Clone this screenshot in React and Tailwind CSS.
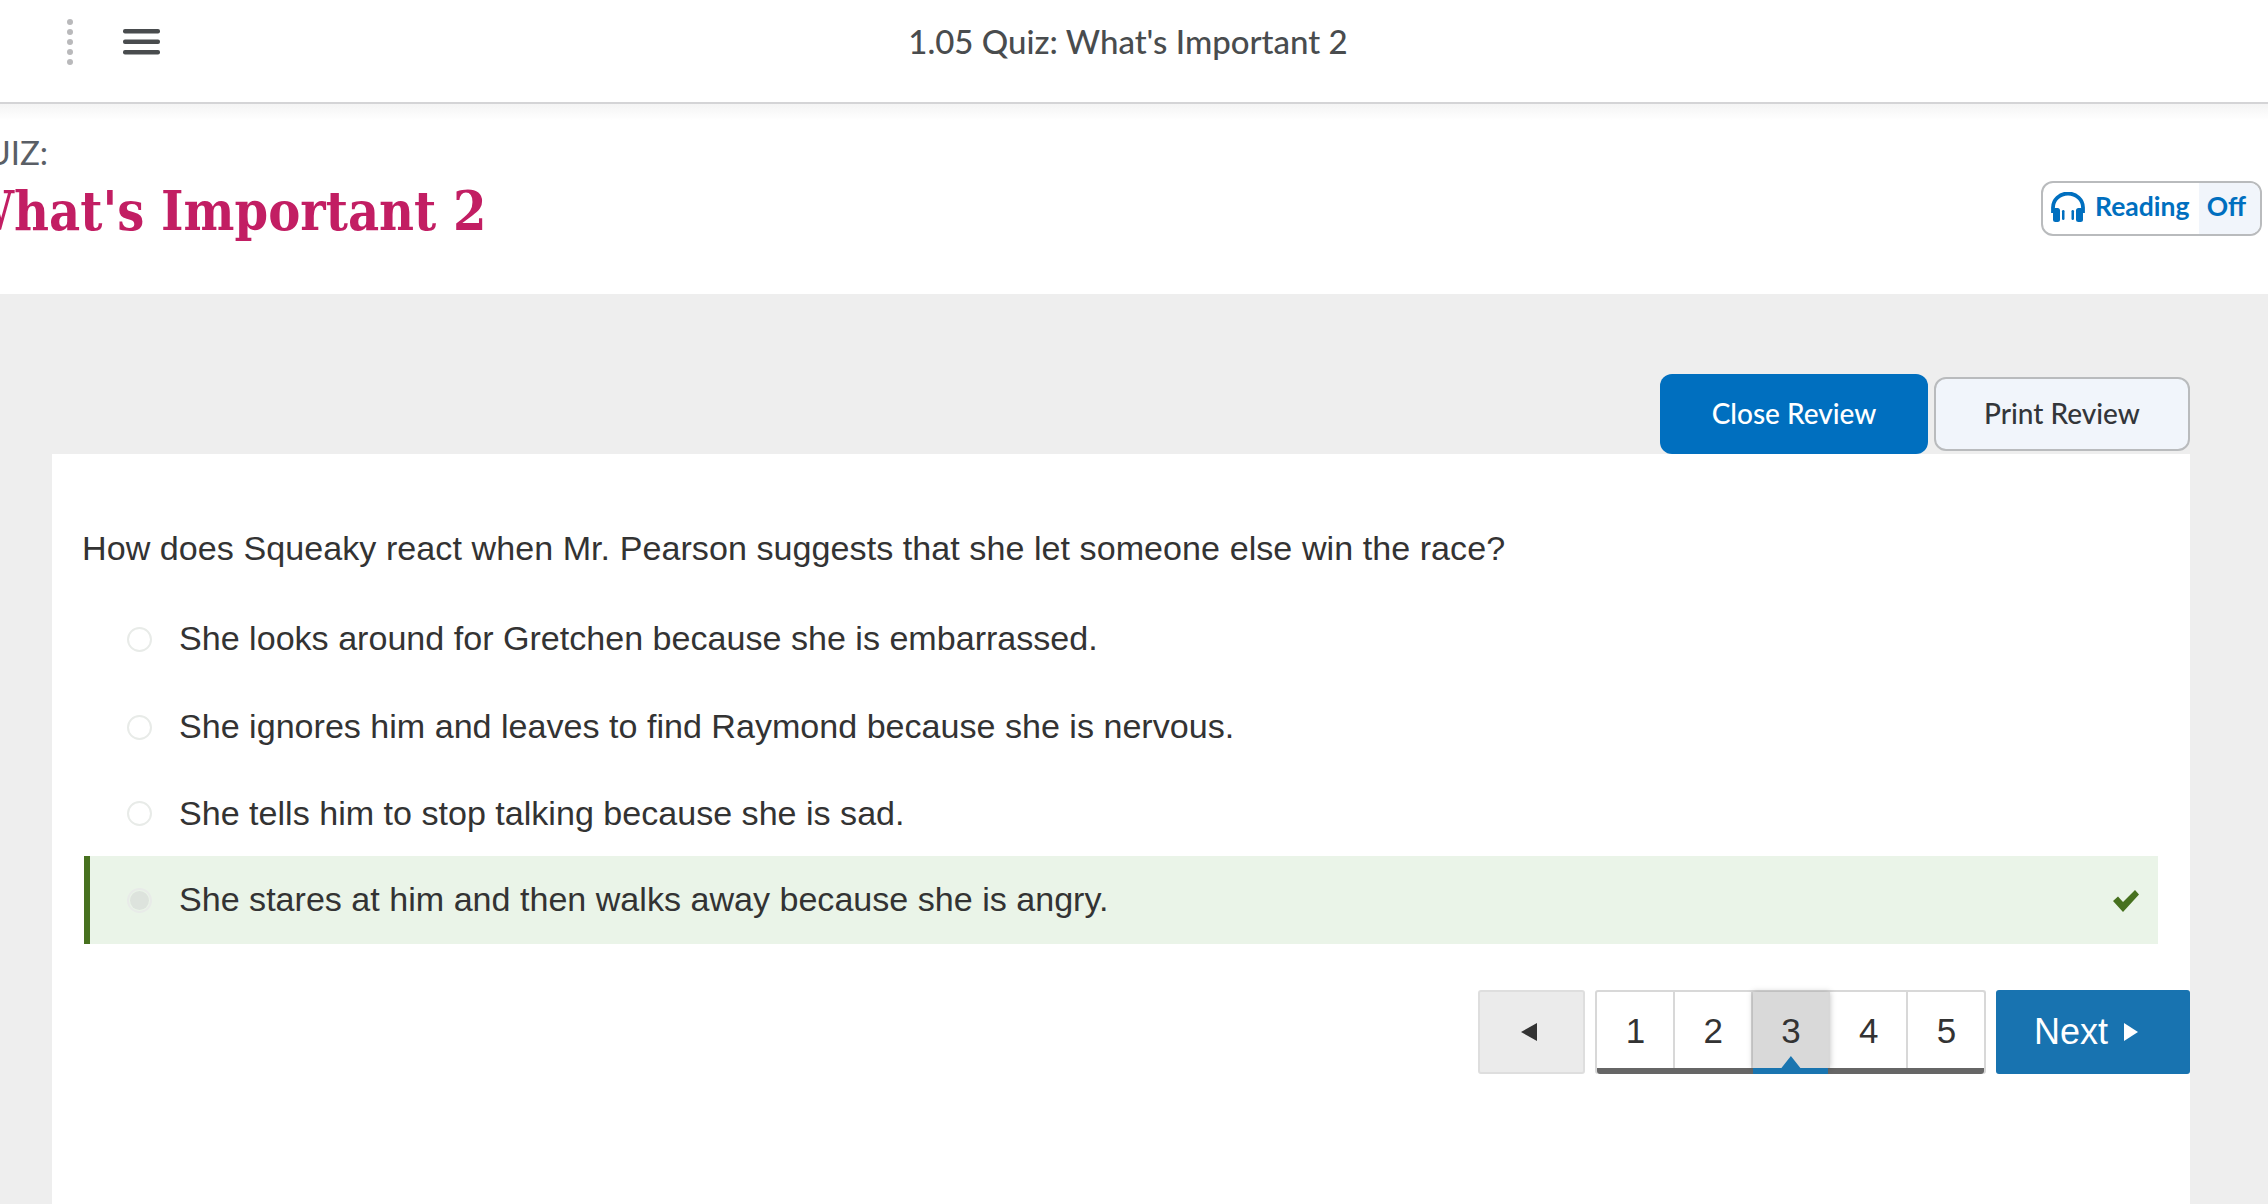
const answers = [
  { text: "She looks around for Gretchen because she is embarrassed.", height: "h-[88px]" },
  { text: "She ignores him and leaves to find Raymond because she is nervous.", height: "h-[88px]" },
  { text: "She tells him to stop talking because she is sad.", height: "h-[85px]" },
];

function Radio({ checked }) {
  return (
    <span className="flex h-[25px] w-[25px] shrink-0 items-center justify-center rounded-full border-2 border-[#e8ebe8]">
      {checked && <span className="h-[19px] w-[19px] rounded-full bg-[#dde3dd]" />}
    </span>
  );
}

function PageCell({ n, active, last }) {
  return (
    <div
      className={`relative flex flex-1 items-center justify-center ${last ? "" : "border-r-2 border-[#d8d8d8]"} ${
        active ? "border-r-0 bg-[#d9d9d9] shadow-[0_0_6px_rgba(0,0,0,0.25)]" : ""
      }`}
    >
      <span className="mt-[2px] ml-[1px]">{n}</span>
      {active && (
        <svg className="absolute bottom-[-6px] left-0 h-[18px] w-full" viewBox="0 0 80 18" preserveAspectRatio="none">
          <path d="M0 12H30L40 0L50 12H80V18H0Z" fill="#1a75b0" />
        </svg>
      )}
    </div>
  );
}

export default function App() {
  return (
    <div className="flex h-[1204px] w-[2268px] flex-col overflow-hidden bg-white font-['Lato',sans-serif] text-[#494c4e]">
      {/* top nav */}
      <header className="grid h-[102px] shrink-0 grid-cols-[1fr_auto_1fr] items-center pb-[18px] pr-[12px]">
        <div className="flex items-center gap-[50px] pl-[67px]">
          <svg width="6" height="46" viewBox="0 0 6 46" fill="#b9b9bb">
            <circle cx="3" cy="3" r="3" />
            <circle cx="3" cy="13" r="3" />
            <circle cx="3" cy="23" r="3" />
            <circle cx="3" cy="33" r="3" />
            <circle cx="3" cy="43" r="3" />
          </svg>
          <svg width="37" height="26" viewBox="0 0 37 26" fill="#494c4e">
            <rect y="0" width="37" height="4.5" rx="2" />
            <rect y="10.5" width="37" height="4.5" rx="2" />
            <rect y="21" width="37" height="4.5" rx="2" />
          </svg>
        </div>
        <div className="text-[33px] font-medium">1.05 Quiz: What's Important 2</div>
        <div className="flex justify-end">
          <span className="mr-[-62px] h-[50px] w-[50px] rounded-full border-[3px] border-[#494c4e]" />
        </div>
      </header>

      {/* quiz title */}
      <section className="flex h-[192px] shrink-0 items-center justify-between border-t-2 border-[#d4d4d6] bg-gradient-to-b from-[#f4f4f4] to-white to-[16px] pr-[6px]">
        <div className="ml-[-40px] mt-[-20px]">
          <div className="text-[33px] leading-[36px] text-[#5a5f66]">QUIZ:</div>
          <h1 className="mt-[10px] whitespace-nowrap font-['DejaVu_Serif_Condensed','DejaVu_Serif',serif] text-[53.5px] font-bold leading-[64px] text-[#c21e63]">
            What's Important 2
          </h1>
        </div>
        <div className="mt-[18px] flex h-[55px] w-[221px] overflow-hidden rounded-[12px] border-2 border-[#b9bbbd] text-[26.5px] font-bold text-[#006fbf]">
          <div className="flex flex-1 items-center gap-[10px] pb-[2px] pl-[8px]">
            <svg width="34" height="30" viewBox="0 0 34 30">
              <path d="M2 21V15.500a15 14 0 0 1 30 0V21" fill="none" stroke="#006fbf" strokeWidth="3.8" />
              <rect x="2" y="16" width="7" height="14" rx="2.500" fill="#006fbf" />
              <rect x="11" y="18" width="2.500" height="10" rx="1.200" fill="#006fbf" />
              <rect x="25" y="16" width="7" height="14" rx="2.500" fill="#006fbf" />
              <rect x="20.500" y="18" width="2.500" height="10" rx="1.200" fill="#006fbf" />
            </svg>
            <span>Reading</span>
          </div>
          <div className="flex w-[61px] items-center justify-center bg-[#f1f5fb] pb-[2px] pr-[6px]">Off</div>
        </div>
      </section>

      {/* review area */}
      <main className="flex flex-1 flex-col bg-[#eeeeee] pl-[52px] pr-[78px]">
        <div className="flex h-[160px] shrink-0 items-end justify-end gap-[6px]">
          <button className="h-[80px] w-[268px] rounded-[12px] bg-[#006fbf] pb-[2px] text-[28px] font-medium text-white">
            Close Review
          </button>
          <button className="mb-[3px] h-[74px] w-[256px] rounded-[12px] border-2 border-[#b9bbbd] bg-[#f1f5fb] pb-[2px] text-[28px] font-medium text-[#33363a]">
            Print Review
          </button>
        </div>

        <div className="flex flex-1 flex-col bg-white font-['Liberation_Sans',sans-serif] text-[34.1px] text-[#333333]">
          <p className="flex h-[141px] shrink-0 items-end pb-[23px] pl-[30px] leading-[48px] tracking-[0.05px]">
            How does Squeaky react when Mr. Pearson suggests that she let someone else win the race?
          </p>
          <div className="mx-[32px]">
            {answers.map((a) => (
              <div key={a.text} className={`flex items-center gap-[27px] border-l-[6px] border-transparent pl-[37px] ${a.height}`}>
                <Radio />
                <span>{a.text}</span>
              </div>
            ))}
            <div className="flex h-[88px] items-center gap-[27px] border-l-[6px] border-[#47711f] bg-[#eaf4e8] pl-[37px] pr-[19px]">
              <Radio checked />
              <span className="flex-1">She stares at him and then walks away because she is angry.</span>
              <svg width="26" height="22" viewBox="0 0 26 22" className="mt-[2px]">
                <path d="M0 11L5 6.500L10 12L22 0L26 4.500L10 22Z" fill="#47711f" />
              </svg>
            </div>
          </div>

          <nav className="mt-[46px] flex h-[84px] justify-end gap-[10px]">
            <button className="flex w-[107px] items-center justify-center rounded-[3px] border-2 border-[#dedede] bg-[#ebebeb] pr-[6px]">
              <svg width="16" height="18" viewBox="0 0 16 18">
                <path d="M16 0V18L0 9Z" fill="#333333" />
              </svg>
            </button>
            <div className="flex w-[391px] flex-col rounded-[3px] border-2 border-b-0 border-[#d8d8d8] text-[35px]">
              <div className="flex flex-1">
                <PageCell n={1} />
                <PageCell n={2} />
                <PageCell n={3} active />
                <PageCell n={4} />
                <PageCell n={5} last />
              </div>
              <div className="h-[6px] rounded-b-[3px] bg-[#666666]" />
            </div>
            <button className="flex w-[194px] items-center justify-center gap-[16px] rounded-[3px] bg-[#1873b0] pr-[14px] text-[36px] text-white">
              <span>Next</span>
              <svg width="14" height="18" viewBox="0 0 14 18">
                <path d="M0 0V18L14 9Z" fill="white" />
              </svg>
            </button>
          </nav>
        </div>
      </main>
    </div>
  );
}
